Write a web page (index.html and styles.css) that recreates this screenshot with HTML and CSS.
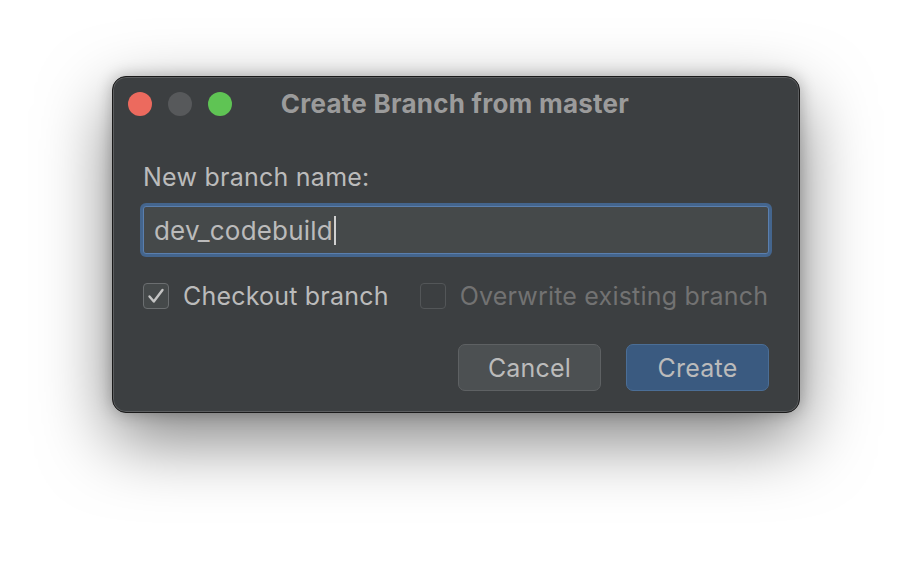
FILE: index.html
```html
<!DOCTYPE html>
<html>
<head>
<meta charset="utf-8">
<link rel="stylesheet" href="styles.css">
</head>
<body>
<div class="stage">
  <div class="window">
    <div class="titlebar">
      <div class="lights">
        <span class="light red"></span>
        <span class="light grey"></span>
        <span class="light green"></span>
      </div>
      <div class="title">Create Branch from master</div>
      <div></div>
    </div>
    <div class="content">
      <div class="label">New branch name:</div>
      <div class="input"><span class="value">dev_codebuild</span><span class="caret"></span></div>
      <div class="options">
        <label class="check">
          <span class="box checked">
            <svg width="26" height="26" viewBox="0 0 26 26"><path d="M6.5 13.5 L10.8 18.5 L19.5 7" fill="none" stroke="#c4c4c4" stroke-width="2.4" stroke-linecap="round" stroke-linejoin="round"/></svg>
          </span>
          <span class="check-text">Checkout branch</span>
        </label>
        <label class="check disabled">
          <span class="box"></span>
          <span class="check-text">Overwrite existing branch</span>
        </label>
      </div>
      <div class="buttons">
        <button class="btn">Cancel</button>
        <button class="btn primary">Create</button>
      </div>
    </div>
  </div>
</div>
</body>
</html>
```
FILE: styles.css
```css
html, body {
  margin: 0;
  padding: 0;
  background: #ffffff;
}
body {
  width: 912px;
  height: 562px;
  overflow: hidden;
  font-family: Inter, "Liberation Sans", sans-serif;
}
.stage {
  padding: 76px 0 0 112px;
}
.window {
  box-sizing: border-box;
  width: 688px;
  height: 337px;
  background: #3c3f41;
  border: 1px solid #1a1a1a;
  border-radius: 14px;
  box-shadow: inset 0 0 0 1px #5c5e60, 0 26px 70px rgba(0,0,0,0.5), 0 0 16px rgba(0,0,0,0.25);
  display: flex;
  flex-direction: column;
  white-space: nowrap;
}
.titlebar {
  flex-shrink: 0;
  height: 54px;
  display: grid;
  grid-template-columns: 1fr auto 1fr;
  align-items: center;
  padding: 0 15px;
}
.lights {
  display: flex;
  gap: 16px;
}
.light {
  width: 24px;
  height: 24px;
  border-radius: 50%;
  display: block;
}
.red { background: #ec6a5e; }
.grey { background: #57595b; }
.green { background: #5fc454; }
.title {
  font-size: 26px;
  line-height: 32px;
  font-weight: 700;
  color: #9b9b9b;
  letter-spacing: 0.25px;
  transform: translateX(-1px);
}
.content {
  padding: 0 30px;
  display: flex;
  flex-direction: column;
}
.label {
  margin-top: 31px;
  font-size: 25px;
  line-height: 30px;
  letter-spacing: 0.25px;
  color: #bbbbbb;
}
.input {
  flex-shrink: 0;
  margin-top: 14px;
  box-sizing: border-box;
  height: 48px;
  background: #45494a;
  border: 1px solid #5a7fae;
  border-radius: 3px;
  box-shadow: 0 0 0 3px #44658d;
  display: flex;
  align-items: center;
  padding-left: 10px;
  font-size: 26px;
  letter-spacing: 0.2px;
  color: #bbbbbb;
}
.caret {
  display: inline-block;
  width: 2px;
  height: 29px;
  background: #d0d0d0;
  margin-left: 1px;
}
.options {
  margin-top: 27px;
  display: flex;
  gap: 31px;
  align-items: center;
}
.check {
  flex-shrink: 0;
  display: flex;
  align-items: center;
  gap: 14px;
}
.box {
  flex-shrink: 0;
  box-sizing: border-box;
  width: 26px;
  height: 26px;
  border: 1px solid #5f6263;
  border-radius: 4px;
  display: block;
}
.box.checked {
  background: #45494a;
  border-color: #6b6e70;
}
.box svg { display: block; margin: -1px; }
.check-text {
  font-size: 25px;
  line-height: 30px;
  letter-spacing: 0.2px;
  color: #bbbbbb;
}
.disabled .box {
  border-color: #535658;
}
.disabled .check-text {
  color: #727272;
}
.buttons {
  margin-top: 33px;
  display: flex;
  justify-content: flex-end;
  gap: 25px;
}
.btn {
  flex-shrink: 0;
  box-sizing: border-box;
  width: 143px;
  height: 47px;
  border-radius: 7px;
  border: 1px solid #5e6163;
  background: #4c5052;
  color: #bbbbbb;
  font-family: Inter, "Liberation Sans", sans-serif;
  font-size: 25px;
  letter-spacing: 0.2px;
  padding: 0;
}
.btn.primary {
  background: #3a5a80;
  border-color: #4b6e96;
}
```
